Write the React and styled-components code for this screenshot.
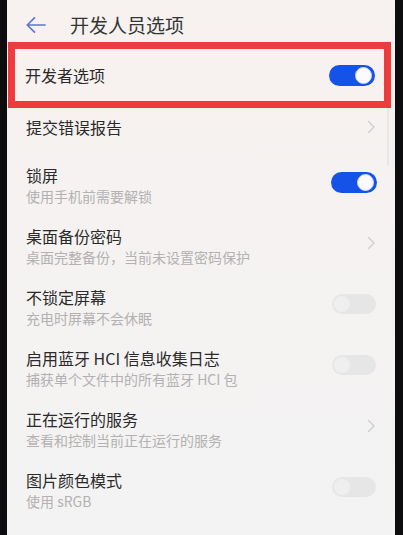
import React from "react";
import styled, { createGlobalStyle } from "styled-components";

const Global = createGlobalStyle`
  html, body { margin: 0; padding: 0; background: #0d0d0f; }
  body { font-family: "Noto Sans CJK SC", "Noto Sans", sans-serif; }
`;

const Frame = styled.div`
  width: 403px;
  height: 535px;
  background: #0d0d0f;
  overflow: hidden;
`;

const Screen = styled.div`
  position: relative;
  margin-left: 7px;
  width: 388px;
  height: 535px;
  background: linear-gradient(180deg, #f7f1ef 0%, #f5f2f1 40%, #f3f3f3 100%);
  display: flex;
  flex-direction: column;
`;

const Header = styled.div`
  height: 42px;
  display: flex;
  align-items: center;
  padding: 0 0 0 18px;
  box-sizing: border-box;
`;

const Title = styled.div`
  margin-left: 23px;
  font-size: 19px;
  line-height: 24px;
  color: #353535;
  margin-top: 8px;
`;

const BackIcon = styled.svg`
  margin-top: 8px;
  flex: none;
`;

const Highlight = styled.div`
  margin: 0 4px 0 1px;
  border: 7px solid #ee3b3d;
  height: 66px;
  box-sizing: border-box;
  display: flex;
  align-items: center;
  padding: 0 9px 0 10px;
  background: #f7f1ef;
`;

const List = styled.div`
  display: flex;
  flex-direction: column;
`;

const Row = styled.div`
  display: flex;
  align-items: center;
  height: ${(p) => (p.$single ? 47 : 61)}px;
  box-sizing: border-box;
  padding: ${(p) => (p.$single ? "8px 18px 17px 19px" : "9px 18px 10px 19px")};
`;

const Texts = styled.div`
  flex: 1;
  display: flex;
  flex-direction: column;
  min-width: 0;
`;

const Label = styled.div`
  font-size: 16px;
  line-height: 22px;
  color: #2a2a2a;
  white-space: nowrap;
`;

const Sub = styled.div`
  font-size: 14px;
  line-height: 20px;
  color: #b3b1b1;
  white-space: nowrap;
`;

const Side = styled.div`
  flex: none;
  display: flex;
  align-items: center;
  margin-bottom: ${(p) => (p.$shift ? 6 : 0)}px;
`;

const Track = styled.div`
  position: relative;
  width: ${(p) => (p.$on ? 46 : 44)}px;
  height: ${(p) => (p.$on ? 21 : 20)}px;
  border-radius: 11px;
  background: ${(p) => (p.$on ? "#1553e8" : "#e7e6e6")};
  margin-right: ${(p) => (p.$on ? 0 : 1)}px;
`;

const Knob = styled.div`
  position: absolute;
  top: 2px;
  ${(p) => (p.$on ? "right: 3px;" : "left: 2px;")}
  width: ${(p) => (p.$on ? 17 : 16)}px;
  height: ${(p) => (p.$on ? 17 : 16)}px;
  border-radius: 50%;
  background: ${(p) => (p.$on ? "#fbfbff" : "#efefef")};
  box-sizing: border-box;
  ${(p) => (p.$on ? "border: 1px solid #c9d6ff;" : "")}
`;

const Scrollbar = styled.div`
  position: absolute;
  left: 380px;
  top: 108px;
  width: 2px;
  height: 58px;
  background: #e8e6e6;
  border-radius: 1px;
`;

const Toggle = ({ on }) => (
  <Track $on={on}>
    <Knob $on={on} />
  </Track>
);

const Chevron = () => (
  <svg width="10" height="14" viewBox="0 0 10 14" style={{ marginRight: 1 }}>
    <path d="M2.5 1.5 L8 7 L2.5 12.5" fill="none" stroke="#cfcdcd" strokeWidth="1.4" strokeLinecap="round" strokeLinejoin="round" />
  </svg>
);

const items = [
  { label: "提交错误报告", kind: "chev", single: true },
  { label: "锁屏", sub: "使用手机前需要解锁", kind: "on" },
  { label: "桌面备份密码", sub: "桌面完整备份，当前未设置密码保护", kind: "chev" },
  { label: "不锁定屏幕", sub: "充电时屏幕不会休眠", kind: "off" },
  { label: "启用蓝牙 HCI 信息收集日志", sub: "捕获单个文件中的所有蓝牙 HCI 包", kind: "off" },
  { label: "正在运行的服务", sub: "查看和控制当前正在运行的服务", kind: "chev" },
  { label: "图片颜色模式", sub: "使用 sRGB", kind: "off" },
];

export default function App() {
  return (
    <Frame>
      <Global />
      <Screen>
        <Header>
          <BackIcon width="22" height="18" viewBox="0 0 22 18">
            <path d="M20 9 H2.5 M9.5 1.8 L2.2 9 L9.5 16.2" fill="none" stroke="#6274d4" strokeWidth="1.7" strokeLinecap="round" strokeLinejoin="round" />
          </BackIcon>
          <Title>开发人员选项</Title>
        </Header>
        <Highlight>
          <Texts>
            <Label>开发者选项</Label>
          </Texts>
          <Side>
            <Toggle on />
          </Side>
        </Highlight>
        <List>
          {items.map((it) => (
            <Row key={it.label} $single={it.single}>
              <Texts>
                <Label>{it.label}</Label>
                {it.sub && <Sub>{it.sub}</Sub>}
              </Texts>
              <Side $shift={!it.single}>
                {it.kind === "chev" ? <Chevron /> : <Toggle on={it.kind === "on"} />}
              </Side>
            </Row>
          ))}
        </List>
        <Scrollbar />
      </Screen>
    </Frame>
  );
}
